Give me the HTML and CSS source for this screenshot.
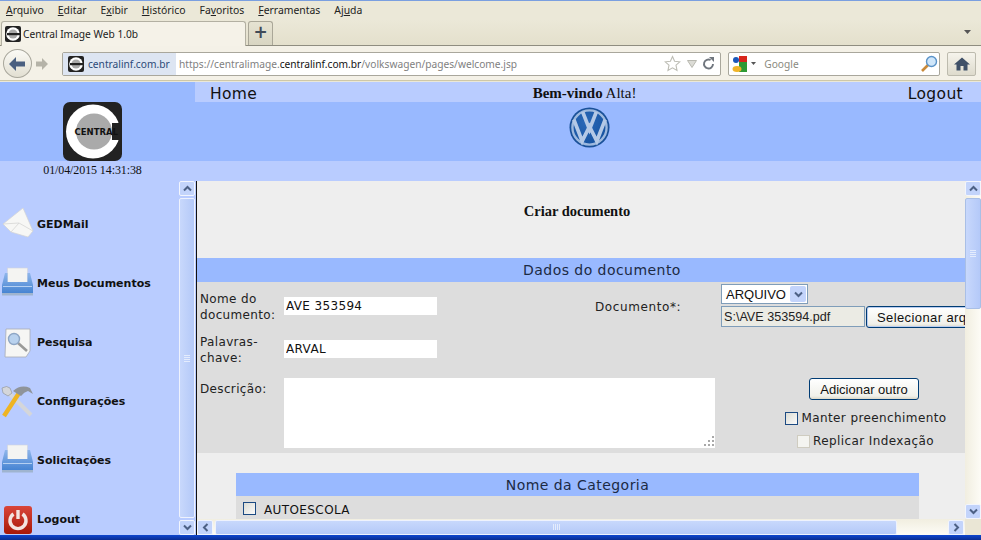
FILE: index.html
```html
<!DOCTYPE html>
<html lang="pt-BR">
<head>
    <meta charset="UTF-8">
    <title>Central Image Web 1.0b</title>
    <link rel="stylesheet" href="styles.css">
</head>
<body>

<svg class="defs" width="0" height="0">
    <defs>
        <linearGradient id="trayBlue" x1="0" y1="0" x2="0" y2="1">
            <stop offset="0" stop-color="#8fb6ea"/>
            <stop offset="1" stop-color="#3f7fd0"/>
        </linearGradient>
        <linearGradient id="powerRed" x1="0" y1="0" x2="0" y2="1">
            <stop offset="0" stop-color="#d9453a"/>
            <stop offset="1" stop-color="#a81808"/>
        </linearGradient>
        <radialGradient id="vwBlue" cx="0.4" cy="0.35" r="0.8">
            <stop offset="0" stop-color="#2a69b8"/>
            <stop offset="1" stop-color="#134f9c"/>
        </radialGradient>
        <symbol id="i-chev" viewBox="0 0 9 7">
            <path d="M1 5.5 L4.5 2 L8 5.5" fill="none" stroke="#4d6185" stroke-width="2"/>
        </symbol>
        <symbol id="i-favicon" viewBox="0 0 16 16">
            <rect width="16" height="16" rx="2" fill="#222"/>
            <circle cx="8" cy="8" r="6.8" fill="#fff"/>
            <circle cx="8" cy="8" r="4.6" fill="#aaa"/>
            <rect x="2" y="7" width="14" height="2.2" fill="#222"/>
        </symbol>
        <symbol id="i-tray" viewBox="0 0 33 30">
            <rect x="6.5" y="1" width="20" height="16" fill="#f4f4f2" stroke="#d0d4dc" stroke-width=".6"/>
            <path d="M4 6 H6.5 V15 H26.5 V6 H29 L32 18 V26 Q32 28 30 28 H3 Q1 28 1 26 V18 Z" fill="url(#trayBlue)"/>
            <rect x="1" y="26" width="31" height="2.5" fill="#9fb4cf"/>
            <rect x="2" y="19" width="29" height="1" fill="#b5d0f2"/>
        </symbol>
    </defs>
</svg>

<div class="browser">
    <div class="menu-bar">
        <span><u>A</u>rquivo</span>
        <span><u>E</u>ditar</span>
        <span>E<u>x</u>ibir</span>
        <span><u>H</u>istórico</span>
        <span>Fa<u>v</u>oritos</span>
        <span><u>F</u>erramentas</span>
        <span>Aj<u>u</u>da</span>
    </div>
    <div class="tab-bar">
        <div class="tab">
            <svg class="favicon"><use href="#i-favicon"/></svg>
            <span>Central Image Web 1.0b</span>
        </div>
        <div class="new-tab">+</div>
        <svg class="tab-list" width="7" height="4" viewBox="0 0 7 4"><path d="M0 0 H7 L3.5 4 Z" fill="#555"/></svg>
    </div>
    <div class="nav-bar">
        <div class="back-btn">
            <svg width="20" height="18" viewBox="0 0 20 18"><path d="M9 2 L2 9 L9 16 V11.5 H18 V6.5 H9 Z" fill="#4a5f80"/></svg>
        </div>
        <svg class="forward" width="14" height="14" viewBox="0 0 14 14"><path d="M7 1 L13 7 L7 13 V9.5 H1 V4.5 H7 Z" fill="#b5b3a8"/></svg>
        <div class="url-bar">
            <div class="identity">
                <svg class="favicon"><use href="#i-favicon"/></svg>
                <span>centralinf.com.br</span>
            </div>
            <div class="url-text">https://centralimage.<b>centralinf.com.br</b>/volkswagen/pages/welcome.jsp</div>
            <svg width="17" height="17" viewBox="0 0 17 17"><path d="M8.5 1.5 L10.6 6.2 L15.8 6.8 L12 10.2 L13 15.4 L8.5 12.8 L4 15.4 L5 10.2 L1.2 6.8 L6.4 6.2 Z" fill="#fff" stroke="#bdbdb5" stroke-width="1.1"/></svg>
            <svg class="url-drop" width="10" height="8" viewBox="0 0 10 8"><path d="M0.5 0.5 H9.5 L5 7.5 Z" fill="#dcdcd6" stroke="#b8b8b0"/></svg>
            <svg class="reload" width="13" height="13" viewBox="0 0 13 13"><path d="M11 7 A4.5 4.5 0 1 1 8.6 3" fill="none" stroke="#70767e" stroke-width="1.9"/><path d="M7 0 H12 V5 Z" fill="#70767e"/></svg>
        </div>
        <div class="search-bar">
            <svg width="16" height="18" viewBox="0 0 16 18">
                <rect x="7" y="1" width="8" height="7" fill="#d8261c"/>
                <rect x="7" y="7" width="8" height="10" fill="#2e9a34"/>
                <circle cx="4" cy="5" r="3" fill="#1b57b8"/>
                <ellipse cx="5" cy="14" rx="4.5" ry="3" fill="#f0b428"/>
            </svg>
            <svg class="search-drop" width="5" height="3" viewBox="0 0 5 3"><path d="M0 0 H5 L2.5 3 Z" fill="#555"/></svg>
            <span class="search-text">Google</span>
            <svg width="18" height="18" viewBox="0 0 18 18">
                <path d="M8 10 L2 16" stroke="#c98a3a" stroke-width="2.6"/>
                <circle cx="11.5" cy="6.5" r="5" fill="#cfe6fa" stroke="#5b93c8" stroke-width="1.4"/>
            </svg>
        </div>
        <div class="home-btn">
            <svg width="16" height="14" viewBox="0 0 16 14"><path d="M8 0.5 L16 7.5 H13.5 V13.5 H9.5 V9 H6.5 V13.5 H2.5 V7.5 H0 Z" fill="#3f5068"/></svg>
        </div>
    </div>
</div>

<div class="page-header">
    <div class="brand">
        <div class="brand-logo">
            <svg width="59" height="59" viewBox="0 0 59 59">
                <rect width="59" height="59" rx="7" fill="#222"/>
                <circle cx="30" cy="29.5" r="27" fill="#fff"/>
                <circle cx="31" cy="29.5" r="18" fill="#aaa"/>
                <rect x="49" y="21" width="10" height="17" fill="#222"/>
                <text x="11.5" y="33" class="logo-text">CENTRAL</text>
            </svg>
        </div>
        <div class="brand-date">01/04/2015 14:31:38</div>
    </div>
    <div class="header-main">
        <div class="top-nav">
            <span class="top-link">Home</span>
            <span class="welcome"><b>Bem-vindo</b> Alta!</span>
            <span class="top-link">Logout</span>
        </div>
        <div class="banner">
            <svg width="41" height="41" viewBox="-21 -21 42 42">
                <circle r="20.5" fill="#1a5199"/>
                <circle r="17.5" fill="url(#vwBlue)" stroke="#9db9de" stroke-width="2.4"/>
                <path d="M-7 -16 L0 2 L7 -16 M-16 -8 L-7.5 14 L0 -1 L7.5 14 L16 -8" fill="none" stroke="#b4c9e6" stroke-width="3.8"/>
            </svg>
        </div>
        <div class="header-strip"></div>
    </div>
</div>

<div class="page-body">
    <div class="sidebar">
        <ul class="side-menu">
            <li>
                <svg class="icon-up" width="33" height="30" viewBox="0 0 33 30">
                    <path d="M2 16 L22 0 L32 23 L27 29 L10 24 Z" fill="#f7f7f5" stroke="#d4d4d2" stroke-width=".7"/>
                    <path d="M2 16 L18 15 L32 23 M10 24 L18 15" fill="none" stroke="#d6d6d4" stroke-width=".8"/>
                </svg>
                <span>GEDMail</span>
            </li>
            <li>
                <svg class="icon-up" width="33" height="30"><use href="#i-tray"/></svg>
                <span>Meus Documentos</span>
            </li>
            <li>
                <svg width="33" height="30" viewBox="0 0 33 30">
                    <path d="M5 1 H29 V23 L25 29 H4 Z" fill="#f6f6f4" stroke="#a8acb4" stroke-width=".8"/>
                    <path d="M17 15 L26 23" stroke="#9a9a98" stroke-width="2.6"/>
                    <circle cx="13" cy="11" r="5.5" fill="#b9d2ee" stroke="#8ea6c4" stroke-width="1.4"/>
                </svg>
                <span>Pesquisa</span>
            </li>
            <li>
                <svg width="33" height="33" viewBox="0 0 33 33">
                    <path d="M5 5 L30 30" stroke="#d4d6da" stroke-width="4"/>
                    <path d="M1 3 Q6 0 9 3 L11 8 L7 11 L2 8 Z" fill="#d4d6da" stroke="#8a8e92" stroke-width=".6"/>
                    <path d="M3 31 L20 5" stroke="#eeb422" stroke-width="4.4"/>
                    <path d="M12 6 Q20 -1 29 3 L32 9 L27 6 Q23 7 20 11 Z" fill="#8f949a"/>
                </svg>
                <span>Configurações</span>
            </li>
            <li>
                <svg class="icon-up" width="33" height="30"><use href="#i-tray"/></svg>
                <span>Solicitações</span>
            </li>
            <li>
                <svg width="33" height="30" viewBox="0 0 33 30">
                    <rect x="3" y="1" width="28" height="28" rx="3" fill="url(#powerRed)"/>
                    <path d="M12.5 9 A8 8 0 1 0 21.5 9" fill="none" stroke="#f4e4e0" stroke-width="3.4"/>
                    <path d="M17 5 V14" stroke="#f4e4e0" stroke-width="3.4"/>
                </svg>
                <span>Logout</span>
            </li>
        </ul>
        <div class="vscroll vscroll-side">
            <div class="sb-btn"><svg><use href="#i-chev"/></svg></div>
            <div class="sb-thumb sb-thumb-side"><i></i><i></i><i></i><i></i></div>
            <div class="sb-btn sb-down"><svg><use href="#i-chev"/></svg></div>
        </div>
    </div>

    <div class="content-wrap">
        <div class="content-row">
            <div class="content">
                <div class="doc-title">Criar documento</div>
                <div class="section-head">Dados do documento</div>
                <form class="doc-form">
                    <label class="f-label">Nome do documento:</label>
                    <div class="f-cell"><input class="f-input" type="text" value="AVE 353594"></div>
                    <label class="f-label f-label-mid">Documento*:</label>
                    <div class="f-file">
                        <div class="select-box"><span>ARQUIVO</span><b><svg><use href="#i-chev"/></svg></b></div>
                        <div class="file-line">
                            <input class="file-path" type="text" value="S:\AVE 353594.pdf">
                            <button class="btn btn-focus" type="button">Selecionar arquivo</button>
                        </div>
                    </div>

                    <label class="f-label">Palavras-chave:</label>
                    <div class="f-cell f-wide"><input class="f-input" type="text" value="ARVAL"></div>

                    <label class="f-label f-label-area">Descrição:</label>
                    <div class="f-area f-wide">
                        <textarea></textarea>
                        <svg class="grip" width="11" height="11" viewBox="0 0 11 11"><path d="M9 1h2v2H9zM5 5h2v2H5zM9 5h2v2H9zM1 9h2v2H1zM5 9h2v2H5zM9 9h2v2H9z" fill="#a8a8a8"/></svg>
                    </div>
                    <div class="f-actions">
                        <button class="btn" type="button">Adicionar outro</button>
                        <label class="check-line"><span class="check"></span>Manter preenchimento</label>
                        <label class="check-line check-off"><span class="check"></span>Replicar Indexação</label>
                    </div>
                </form>
                <div class="category">
                    <div class="section-head cat-head">Nome da Categoria</div>
                    <div class="cat-row"><span class="check"></span>AUTOESCOLA</div>
                </div>
            </div>
            <div class="vscroll vscroll-main">
                <div class="sb-btn"><svg><use href="#i-chev"/></svg></div>
                <div class="sb-thumb sb-thumb-main"><i></i><i></i><i></i><i></i></div>
                <div class="sb-track"></div>
                <div class="sb-btn sb-down"><svg><use href="#i-chev"/></svg></div>
            </div>
        </div>
        <div class="hscroll">
            <div class="sb-btn sb-left"><svg><use href="#i-chev"/></svg></div>
            <div class="sb-thumb sb-thumb-h"><i></i><i></i><i></i><i></i></div>
            <div class="sb-track"></div>
            <div class="sb-btn sb-right"><svg><use href="#i-chev"/></svg></div>
            <div class="sb-corner"></div>
        </div>
    </div>
</div>

<div class="taskbar"></div>

</body>
</html>
```

FILE: styles.css
```css
html, body {
    margin: 0;
    padding: 0;
}
body {
    width: 981px;
    height: 540px;
    overflow: hidden;
    font-family: "DejaVu Sans", sans-serif;
    color: #111;
    background: #eee;
}
.defs {
    display: block;
    height: 0;
}

/* browser chrome */
.browser {
    height: 82px;
    box-sizing: border-box;
    border-top: 1px solid #7a9fe0;
    background: #ebe8d8;
    font-family: "Noto Sans", sans-serif;
    font-size: 10.2px;
    color: #222;
}
.menu-bar {
    display: flex;
    gap: 14px;
    height: 19px;
    box-sizing: border-box;
    align-items: center;
    padding: 0 0 2px 6px;
    font-size: 10.4px;
}
.tab-bar {
    display: flex;
    align-items: flex-end;
    height: 26px;
    box-sizing: border-box;
    padding-left: 1px;
    border-bottom: 1px solid #8f8d80;
    background: linear-gradient(#ebe8d8, #e4e0cc);
}
.tab {
    display: flex;
    align-items: center;
    gap: 2px;
    width: 245px;
    height: 25px;
    box-sizing: border-box;
    padding-left: 3px;
    margin-bottom: -1px;
    background: #f5f2e8;
    border: 1px solid #b3b0a2;
    border-bottom: none;
    border-radius: 3px 3px 0 0;
}
.favicon {
    width: 16px;
    height: 16px;
    flex: none;
}
.new-tab {
    width: 25px;
    height: 24px;
    box-sizing: border-box;
    margin-left: 2px;
    background: linear-gradient(#e6e3d2, #d8d5c2);
    border: 1px solid #aaa798;
    border-bottom: none;
    border-radius: 3px 3px 0 0;
    font: bold 17px/21px "DejaVu Sans", sans-serif;
    color: #404a58;
    text-align: center;
}
.tab-list {
    margin: 0 10px 11px auto;
}
.nav-bar {
    display: flex;
    align-items: center;
    height: 35px;
    box-sizing: border-box;
    padding: 1px 5px 0 3px;
    background: #f4f1e7;
    border-bottom: 1px solid #cfc8a8;
}
.back-btn {
    display: flex;
    align-items: center;
    justify-content: center;
    width: 29px;
    height: 29px;
    box-sizing: border-box;
    background: linear-gradient(#fbfaf5, #e2dfd2);
    border: 1px solid #a9a79c;
    border-radius: 50%;
}
.forward {
    margin: 0 13px 0 3px;
}
.url-bar, .search-bar {
    display: flex;
    align-items: center;
    height: 24px;
    box-sizing: border-box;
    background: #fff;
    border: 1px solid #a9a79c;
    border-radius: 2px;
}
.url-bar {
    width: 660px;
    padding-right: 3px;
}
.identity {
    display: flex;
    align-items: center;
    gap: 4px;
    width: 113px;
    height: 22px;
    box-sizing: border-box;
    padding-left: 5px;
    flex: none;
    background: #dde5f2;
    color: #2c4a78;
}
.url-text {
    flex: 1;
    padding-left: 3px;
    color: #7f7f7f;
    white-space: nowrap;
}
.url-text b {
    font-weight: normal;
    color: #111;
}
.url-drop {
    margin: 0 5px 0 6px;
}
.reload {
    margin-right: 2px;
}
.search-bar {
    width: 212px;
    margin-left: 7px;
    padding: 0 1px 0 3px;
}
.search-drop {
    margin: 0 8px 0 3px;
}
.search-text {
    flex: 1;
    color: #8a8a80;
}
.home-btn {
    display: flex;
    align-items: center;
    justify-content: center;
    width: 29px;
    height: 24px;
    box-sizing: border-box;
    margin-left: 7px;
    background: linear-gradient(#f6f4ec, #dedbcd);
    border: 1px solid #bdbbae;
    border-radius: 2px;
}

/* page header */
.page-header {
    display: flex;
    height: 99px;
    background: #b9ccff;
}
.brand {
    width: 195px;
    flex: none;
}
.brand-logo {
    display: flex;
    justify-content: center;
    align-items: flex-end;
    height: 79px;
    padding-right: 10px;
    background: #99b9ff;
}
.logo-text {
    font: bold 8.5px "DejaVu Sans", sans-serif;
    fill: #111;
}
.brand-date {
    height: 20px;
    padding-right: 10px;
    text-align: center;
    font: 12px/19px "Liberation Serif", serif;
    letter-spacing: -.1px;
}
.header-main {
    flex: 1;
}
.top-nav {
    display: flex;
    justify-content: space-between;
    align-items: center;
    height: 20px;
    box-sizing: border-box;
    padding: 3px 18px 0 15px;
}
.top-link {
    font-size: 15.5px;
    letter-spacing: .35px;
}
.welcome {
    margin-right: -4px;
    font: 15px "Liberation Serif", serif;
}
.banner {
    display: flex;
    justify-content: center;
    align-items: center;
    height: 59px;
    box-sizing: border-box;
    padding: 0 0 9px 3px;
    background: #99b9ff;
}
.header-strip {
    height: 20px;
}

/* body */
.page-body {
    display: flex;
    height: 354px;
}
.sidebar {
    display: flex;
    width: 196px;
    flex: none;
    background: #b9ccff;
}
.side-menu {
    flex: 1;
    margin: 0;
    padding: 14px 0 0;
    list-style: none;
    overflow: hidden;
}
.side-menu li {
    display: flex;
    align-items: center;
    height: 59px;
    padding-left: 1px;
    font-size: 11px;
    font-weight: bold;
}
.side-menu svg {
    width: 33px;
    flex: none;
    margin-right: 3px;
    overflow: visible;
}
.side-menu .icon-up {
    margin-top: -4px;
}

/* scrollbars */
.vscroll {
    display: flex;
    flex-direction: column;
    width: 16px;
    flex: none;
}
.vscroll-side {
    margin-right: 1px;
}
.vscroll-main {
    background: linear-gradient(90deg, #f1eee0, #fdfcf6);
}
.sb-btn {
    display: flex;
    align-items: center;
    justify-content: center;
    width: 16px;
    height: 15px;
    flex: none;
    background: #c3d4fb;
    border: 1px solid #f2f5fd;
    border-radius: 2px;
    box-sizing: border-box;
}
.sb-btn svg {
    width: 9px;
    height: 7px;
}
.sb-down svg { transform: rotate(180deg); }
.sb-left svg { transform: rotate(-90deg); }
.sb-right svg { transform: rotate(90deg); }
.sb-thumb {
    display: flex;
    flex-direction: column;
    align-items: center;
    justify-content: center;
    gap: 1px;
    box-sizing: border-box;
    background: linear-gradient(90deg, #c8d8fc, #b4c9f8);
    border: 1px solid #eef2fd;
    border-radius: 2px;
}
.sb-thumb i {
    display: block;
    width: 6px;
    height: 1px;
    background: #e4ecfd;
}
.sb-thumb-side {
    flex: 1;
    margin: 2px 0;
}
.sb-thumb-main {
    height: 111px;
    margin-top: 2px;
    border-color: #a9bfe6;
}
.sb-track {
    flex: 1;
}
.hscroll {
    display: flex;
    align-items: center;
    height: 16px;
    background: linear-gradient(#f1eee0, #fdfcf6);
}
.sb-thumb-h {
    flex-direction: row;
    width: 682px;
    height: 15px;
    margin: 0 0 0 2px;
    background: linear-gradient(#c8d8fc, #b4c9f8);
}
.sb-thumb-h i {
    width: 1px;
    height: 6px;
}
.sb-corner {
    width: 16px;
    height: 16px;
    flex: none;
    margin-left: 1px;
    background: #eae6d5;
}
.content-wrap {
    display: flex;
    flex-direction: column;
    width: 784px;
    flex: none;
    border-left: 1px solid #111;
}
.content-row {
    display: flex;
    height: 338px;
}
.content {
    width: 768px;
    flex: none;
    overflow: hidden;
    background: #eee;
}
.doc-title {
    height: 77px;
    padding: 22px 8px 0 0;
    box-sizing: border-box;
    text-align: center;
    font: bold 14.5px/16px "Liberation Serif", serif;
}
.section-head {
    width: 810px;
    height: 24px;
    background: #99b9ff;
    text-align: center;
    font-size: 14px;
    line-height: 24px;
    letter-spacing: .45px;
    color: #1c2a44;
}

/* form */
.doc-form {
    display: grid;
    grid-template-columns: 84px 311px 126px 285px;
    grid-template-rows: 43px 53px 75px;
    width: 810px;
    height: 171px;
    box-sizing: border-box;
    padding-left: 3px;
    background: #ddd;
    font-size: 12px;
    letter-spacing: .35px;
    line-height: 16px;
    color: #222;
}
.f-label {
    padding-top: 9px;
}
.f-label-mid {
    padding-top: 17px;
    letter-spacing: .6px;
}
.f-label-area {
    padding-top: 3px;
}
.f-cell {
    padding-top: 15px;
}
.f-wide {
    grid-column: span 2;
}
.f-input {
    display: block;
    width: 153px;
    height: 18px;
    box-sizing: border-box;
    padding: 0 2px;
    border: none;
    background: #fff;
    font: 12px "DejaVu Sans", sans-serif;
    letter-spacing: .35px;
    color: #111;
}
.f-file {
    padding-top: 2px;
    grid-row: span 2;
}
.select-box {
    display: flex;
    align-items: center;
    justify-content: space-between;
    width: 87px;
    height: 20px;
    box-sizing: border-box;
    padding: 0 1px 0 4px;
    background: #fff;
    border: 1px solid #7f9db9;
    font: 13px "Liberation Sans", sans-serif;
    letter-spacing: 0;
    color: #111;
}
.select-box b {
    display: flex;
    align-items: center;
    justify-content: center;
    width: 16px;
    height: 16px;
    background: #c3d4fb;
    border-radius: 2px;
}
.select-box svg {
    width: 9px;
    height: 7px;
    transform: rotate(180deg);
}
.file-line {
    display: flex;
    margin-top: 2px;
}
.file-path {
    width: 144px;
    height: 21px;
    box-sizing: border-box;
    padding: 0 2px;
    background: #ebebe4;
    border: 1px solid #7f9db9;
    font: 12.6px "Liberation Sans", sans-serif;
    color: #222;
}
.btn {
    height: 22px;
    box-sizing: border-box;
    padding: 0 9px;
    background: linear-gradient(#fff, #f0f0ea 85%, #dcd8c8);
    border: 1px solid #003c74;
    border-radius: 3px;
    font: 13px "Liberation Sans", sans-serif;
    letter-spacing: 0;
    color: #111;
    white-space: nowrap;
}
.btn-focus {
    flex: none;
    width: 125px;
    margin-left: 1px;
    padding-left: 10px;
    text-align: left;
    letter-spacing: .4px;
    box-shadow: inset 0 0 0 1px #b9cdf0;
}
.f-area {
    position: relative;
}
.f-area textarea {
    display: block;
    width: 431px;
    height: 70px;
    box-sizing: border-box;
    padding: 2px;
    border: none;
    background: #fff;
    resize: none;
}
.grip {
    position: absolute;
    left: 419px;
    top: 57px;
}
.f-actions {
    display: flex;
    flex-direction: column;
    align-items: center;
    width: 286px;
}
.f-actions .btn {
    width: 110px;
    padding: 0;
}
.check-line {
    display: flex;
    align-items: center;
    gap: 3px;
    margin: 10px 0 0 4px;
    letter-spacing: .4px;
}
.check-off {
    margin: 7px 0 0 3px;
}
.check-off .check {
    background: #f4f4f0;
    border-color: #cfccc0;
}
.check {
    width: 13px;
    height: 13px;
    box-sizing: border-box;
    flex: none;
    background: linear-gradient(135deg, #dcdcd4, #fafafa);
    border: 1px solid #1c4a82;
}

/* category */
.category {
    width: 683px;
    margin: 20px 0 0 39px;
}
.cat-head {
    width: 683px;
    height: 23px;
    line-height: 25px;
}
.cat-row {
    display: flex;
    align-items: center;
    gap: 8px;
    height: 23px;
    padding: 4px 0 0 7px;
    box-sizing: border-box;
    background: #ddd;
    font-size: 12px;
    letter-spacing: .4px;
}
.cat-row .check {
    margin-top: -2px;
}
.taskbar {
    height: 5px;
    background: linear-gradient(#0d47d0, #0a2c90);
}
```
